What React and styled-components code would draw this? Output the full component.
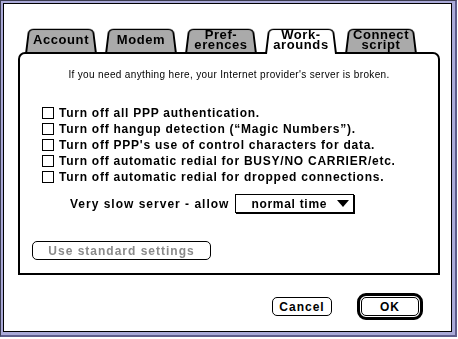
import React from 'react';
import styled, { createGlobalStyle } from 'styled-components';

const GlobalStyle = createGlobalStyle`
  html, body {
    margin: 0;
    padding: 0;
    background: #fff;
  }
  body {
    font-family: "Liberation Sans", Arial, sans-serif;
  }
`;

const Window = styled.div`
  width: 457px;
  height: 337px;
  box-sizing: border-box;
  display: flex;
  background: #aaaad8;
  border-top: 1px solid #3a3a4e;
  border-left: 1px solid #3a3a4e;
  border-right: 2px solid #5e5e8c;
  border-bottom: 2px solid #5e5e8c;
  padding: 2px 3px 3px 2px;
`;

const Content = styled.div`
  flex: 1;
  display: flex;
  flex-direction: column;
  background: #fff;
  border: 1px solid #000;
  padding-top: 24px;
`;

const TabRow = styled.div`
  display: flex;
  gap: 8px;
  padding-left: 21px;
  height: 26px;
  margin-bottom: -2px;
`;

const Tab = styled.div`
  position: relative;
  z-index: ${p => (p.$active ? 3 : 0)};
  width: 72px;
  height: 26px;
  box-sizing: border-box;
  padding-bottom: 2px;
  display: flex;
  align-items: center;
  justify-content: center;
  text-align: center;
  font-weight: bold;
  font-size: 13px;
  letter-spacing: 0.6px;
  line-height: 10px;
  white-space: pre;
  color: #000;

  &::before {
    content: '';
    position: absolute;
    left: 0;
    right: 0;
    bottom: 0;
    height: 32px;
    box-sizing: border-box;
    border: 2px solid #000;
    border-bottom: none;
    border-radius: 6px 6px 0 0;
    background: ${p => (p.$active ? '#fff' : '#aaaaaa')};
    transform: perspective(167px) rotateX(30deg);
    transform-origin: bottom center;
    z-index: -1;
  }
`;

const Panel = styled.div`
  position: relative;
  z-index: 1;
  margin-left: 14px;
  width: 422px;
  height: 223px;
  box-sizing: border-box;
  border: 2px solid #000;
  border-radius: 7px 7px 0 0;
  background: #fff;
  display: flex;
  flex-direction: column;
  padding-top: 15px;
`;

const Note = styled.div`
  font-size: 10px;
  line-height: 12px;
  letter-spacing: 0.35px;
  text-align: center;
  color: #000;
`;

const CheckList = styled.div`
  display: flex;
  flex-direction: column;
  margin: 24px 0 0 22px;
`;

const CheckRow = styled.label`
  display: flex;
  align-items: center;
  gap: 5px;
  height: 16px;
  font-size: 12px;
  font-weight: bold;
  letter-spacing: 0.75px;
  white-space: nowrap;
`;

const Box = styled.span`
  width: 12px;
  height: 12px;
  box-sizing: border-box;
  border: 1px solid #000;
  background: #fff;
  flex: none;
`;

const SpeedRow = styled.div`
  display: flex;
  align-items: center;
  gap: 6px;
  margin: 9px 0 0 50px;
  font-size: 12px;
  font-weight: bold;
  letter-spacing: 1px;
`;

const Popup = styled.div`
  width: 119px;
  height: 19px;
  box-sizing: border-box;
  border: 1px solid #000;
  box-shadow: 1px 1px 0 #000;
  display: flex;
  align-items: center;
  justify-content: space-between;
  padding: 0 4px 0 15px;
  letter-spacing: 0.7px;
`;

const Arrow = styled.span`
  width: 0;
  height: 0;
  border-left: 6px solid transparent;
  border-right: 6px solid transparent;
  border-top: 7px solid #000;
`;

const Button = styled.div`
  width: ${p => p.$w}px;
  height: 19px;
  box-sizing: border-box;
  border: 1px solid #000;
  border-radius: 5px;
  background: #fff;
  display: flex;
  align-items: center;
  justify-content: center;
  font-size: 12px;
  font-weight: bold;
  letter-spacing: 1px;
  color: ${p => (p.$disabled ? '#8a8a8a' : '#000')};
`;

const StandardRow = styled.div`
  margin: 28px 0 0 12px;
`;

const Footer = styled.div`
  display: flex;
  justify-content: flex-end;
  align-items: center;
  gap: 25px;
  margin-top: 18px;
  padding-right: 28px;
`;

const DefaultRing = styled.div`
  border: 3px solid #000;
  border-radius: 9px;
  padding: 1px;
`;

const tabs = [
  { label: 'Account' },
  { label: 'Modem' },
  { label: 'Pref-\nerences' },
  { label: 'Work-\narounds', active: true },
  { label: 'Connect\nscript' },
];

const options = [
  'Turn off all PPP authentication.',
  'Turn off hangup detection (\u201cMagic Numbers\u201d).',
  "Turn off PPP's use of control characters for data.",
  'Turn off automatic redial for BUSY/NO CARRIER/etc.',
  'Turn off automatic redial for dropped connections.',
];

export default function App() {
  return (
    <>
      <GlobalStyle />
      <Window>
        <Content>
          <TabRow>
            {tabs.map(t => (
              <Tab key={t.label} $active={t.active}>
                {t.label}
              </Tab>
            ))}
          </TabRow>
          <Panel>
            <Note>If you need anything here, your Internet provider's server is broken.</Note>
            <CheckList>
              {options.map(o => (
                <CheckRow key={o}>
                  <Box />
                  {o}
                </CheckRow>
              ))}
            </CheckList>
            <SpeedRow>
              Very slow server - allow
              <Popup>
                normal time
                <Arrow />
              </Popup>
            </SpeedRow>
            <StandardRow>
              <Button $w={179} $disabled>Use standard settings</Button>
            </StandardRow>
          </Panel>
          <Footer>
            <Button $w={60}>Cancel</Button>
            <DefaultRing>
              <Button $w={58}>OK</Button>
            </DefaultRing>
          </Footer>
        </Content>
      </Window>
    </>
  );
}
